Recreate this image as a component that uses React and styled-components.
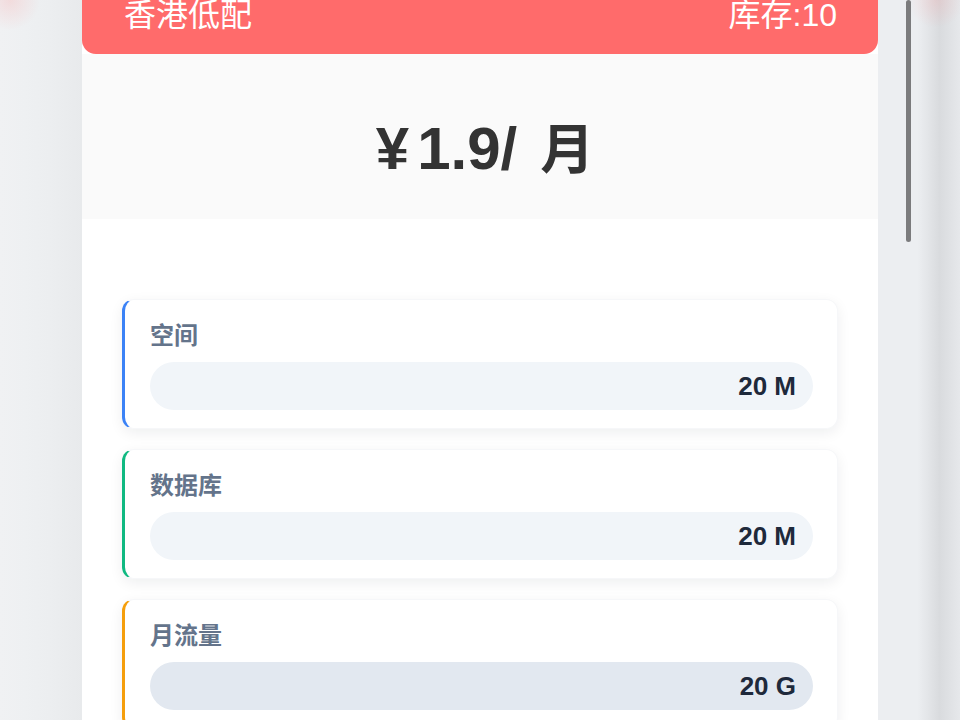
import React from "react";
import styled, { createGlobalStyle } from "styled-components";

const GlobalStyle = createGlobalStyle`
  html, body {
    margin: 0;
    padding: 0;
    height: 100%;
    overflow: hidden;
  }
  body {
    font-family: "Liberation Sans", "Noto Sans CJK SC", sans-serif;
    background: #eceef1;
  }
`;

const features = [
  { label: "空间", value: "20 M", accent: "#3b82f6", fill: "#f1f5f9" },
  { label: "数据库", value: "20 M", accent: "#10b981", fill: "#f1f5f9" },
  { label: "月流量", value: "20 G", accent: "#f59e0b", fill: "#e2e8f0" },
];

const App = () => {
  return (
    <>
      <GlobalStyle />
      <Page>
        <Gutter side="left" />
        <PlanCard>
          <Header>
            <span>香港低配</span>
            <span>库存:10</span>
          </Header>
          <PriceBox>
            <Price>
              <Currency>¥</Currency>1.9/<Unit>月</Unit>
            </Price>
          </PriceBox>
          <FeatureList>
            {features.map((f) => (
              <Feature key={f.label} accent={f.accent}>
                <FeatureLabel>{f.label}</FeatureLabel>
                <ValuePill fill={f.fill}>{f.value}</ValuePill>
              </Feature>
            ))}
          </FeatureList>
        </PlanCard>
        <Gutter side="right">
          <ScrollThumb />
        </Gutter>
      </Page>
    </>
  );
};
export default App;

const Page = styled.div`
  display: flex;
  height: 720px;
  width: 960px;
  overflow: hidden;
`;

const Gutter = styled.div`
  flex: 0 0 82px;
  height: 100%;
  display: flex;
  background: ${(p) =>
    p.side === "left"
      ? `radial-gradient(circle at 10px 0px, rgba(255,120,120,0.18), rgba(255,120,120,0) 30px),
         linear-gradient(90deg, #f0f1f3 0%, #eef0f2 30%, #eceef0 60%, #e8eaec 100%)`
      : `radial-gradient(circle at 58px 0px, rgba(255,120,120,0.16), rgba(255,120,120,0) 28px),
         linear-gradient(90deg, #eceef1 0%, #eceef1 48%, #e4e6e9 60%, #d9dbde 75%, #e6e8eb 100%)`};
`;

const ScrollThumb = styled.div`
  width: 5px;
  height: 242px;
  margin-left: 28px;
  border-radius: 3px;
  background: #7b7b7d;
`;

const PlanCard = styled.div`
  flex: 0 0 796px;
  background: #ffffff;
  display: flex;
  flex-direction: column;
`;

const Header = styled.div`
  flex-shrink: 0;
  height: 54px;
  box-sizing: border-box;
  background: #ff6b6b;
  border-radius: 0 0 14px 14px;
  display: flex;
  align-items: flex-end;
  justify-content: space-between;
  padding: 0 41px 20px 42px;
  color: #ffffff;
  font-size: 32px;
  line-height: 38px;
`;

const PriceBox = styled.div`
  flex-shrink: 0;
  height: 165px;
  box-sizing: border-box;
  background: #fafafa;
  display: flex;
  justify-content: center;
  padding-top: 56px;
`;

const Price = styled.div`
  font-size: 60px;
  font-weight: 700;
  line-height: 72px;
  color: #333333;
  height: 72px;
  padding-left: 10px;
`;

const Currency = styled.span`
  margin-right: 8px;
`;

const Unit = styled.span`
  margin-left: 23px;
  font-family: "Noto Sans CJK SC", sans-serif;
  font-size: 54px;
`;

const FeatureList = styled.div`
  flex-shrink: 0;
  display: flex;
  flex-direction: column;
  gap: 20px;
  padding: 80px 40px 0;
`;

const Feature = styled.div`
  flex-shrink: 0;
  background: #ffffff;
  border-radius: 12px;
  border: 1px solid #f6f7f9;
  border-left: 3px solid ${(p) => p.accent};
  box-shadow: 0 4px 14px rgba(15, 23, 42, 0.07);
  padding: 19px 24px 18px 25px;
  display: flex;
  flex-direction: column;
  gap: 13px;
`;

const FeatureLabel = styled.div`
  font-family: "Noto Sans CJK SC", sans-serif;
  font-size: 24px;
  font-weight: 700;
  line-height: 30px;
  color: #64748b;
`;

const ValuePill = styled.div`
  height: 48px;
  border-radius: 24px;
  background: ${(p) => p.fill};
  display: flex;
  align-items: center;
  justify-content: flex-end;
  padding: 0 17px;
  font-size: 26px;
  font-weight: 700;
  color: #1e293b;
`;
